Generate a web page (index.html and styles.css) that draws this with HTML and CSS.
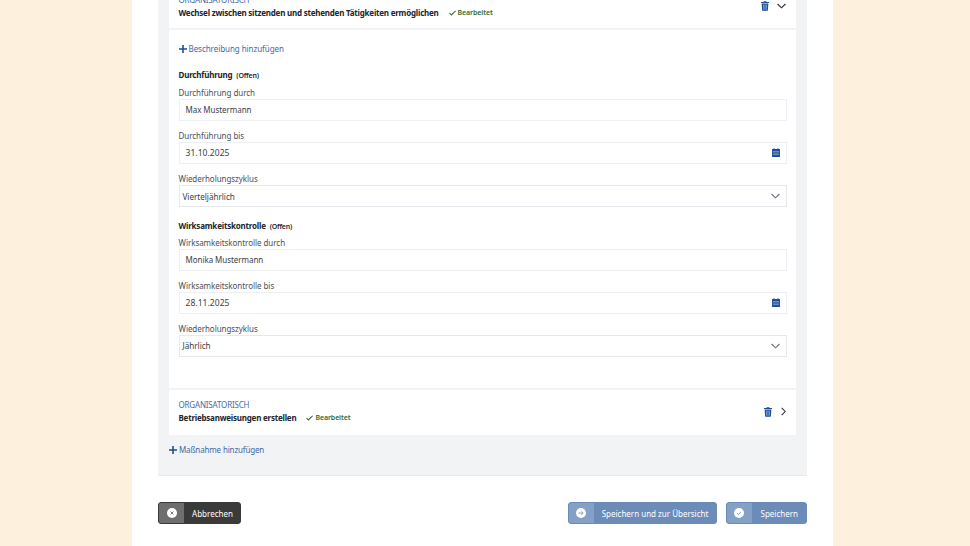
FILE: index.html
```html
<!DOCTYPE html>
<html lang="de">
<head>
<meta charset="utf-8">
<title>Maßnahmen</title>
<link rel="stylesheet" href="styles.css">
</head>
<body>
<svg class="defs" width="0" height="0" aria-hidden="true">
  <symbol id="trash" viewBox="0 0 10 12"><path fill="currentColor" d="M3.500 0h3l.5 1h3v1.200H0V1h3zM.8 3h8.400l-.6 8.200c0 .5-.4.8-.9.8H2.300c-.5 0-.9-.3-.9-.8z"/><path fill="#6f90c4" d="M2.400 4h1.500v6.800H2.600zM4.300 4h1.400v6.800H4.300zM6.100 4h1.500l-.2 6.800H6.100z"/></symbol>
  <symbol id="cal" viewBox="0 0 10 11"><path fill="currentColor" d="M2 0h1v1h4V0h1v1h2v10H0V1h2z"/><path fill="#b9c9e2" d="M1 3.500h8v.8H1zM1 5.700h8v.8H1zM1 7.900h8v.8H1z"/></symbol>
  <symbol id="plus" viewBox="0 0 8 8"><path fill="currentColor" d="M3.200 0h1.600v3.200H8v1.600H4.800V8H3.200V4.800H0V3.200h3.200z"/></symbol>
  <symbol id="check" viewBox="0 0 8 6"><path fill="none" stroke="currentColor" stroke-width="1.200" d="M.5 3l2.200 2.200L7.500.6"/></symbol>
  <symbol id="down" viewBox="0 0 10 6"><path fill="none" stroke="currentColor" stroke-width="1.300" d="M.6.8L5 5l4.400-4.200"/></symbol>
  <symbol id="right" viewBox="0 0 6 10"><path fill="none" stroke="currentColor" stroke-width="1.300" d="M.8.6L5 5 .8 9.400"/></symbol>
</svg>
<main class="page">
  <section class="panel">
    <article class="card">
      <header class="card-head card-head-open">
        <div class="head-text">
          <div class="category">ORGANISATORISCH</div>
          <div class="title-row">
            <strong class="title">Wechsel zwischen sitzenden und stehenden Tätigkeiten ermöglichen</strong>
            <span class="status"><svg class="i-check"><use href="#check"/></svg>Bearbeitet</span>
          </div>
        </div>
        <div class="head-icons">
          <svg class="i-trash"><use href="#trash"/></svg>
          <svg class="i-down-dark"><use href="#down"/></svg>
        </div>
      </header>
      <div class="card-body">
        <a class="add-link add-desc"><svg class="i-plus"><use href="#plus"/></svg>Beschreibung hinzufügen</a>
        <h3 class="group-title">Durchführung <span class="group-state">(Offen)</span></h3>
        <label class="label">Durchführung durch</label>
        <div class="field"><span class="value">Max Mustermann</span></div>
        <label class="label label-gap">Durchführung bis</label>
        <div class="field"><span class="value value-date">31.10.2025</span><svg class="i-cal"><use href="#cal"/></svg></div>
        <label class="label label-gap">Wiederholungszyklus</label>
        <div class="field field-select"><span class="value">Vierteljährlich</span><svg class="i-down"><use href="#down"/></svg></div>
        <h3 class="group-title group-second">Wirksamkeitskontrolle <span class="group-state">(Offen)</span></h3>
        <label class="label">Wirksamkeitskontrolle durch</label>
        <div class="field"><span class="value">Monika Mustermann</span></div>
        <label class="label label-gap">Wirksamkeitskontrolle bis</label>
        <div class="field"><span class="value value-date">28.11.2025</span><svg class="i-cal"><use href="#cal"/></svg></div>
        <label class="label label-gap">Wiederholungszyklus</label>
        <div class="field field-select"><span class="value">Jährlich</span><svg class="i-down"><use href="#down"/></svg></div>
      </div>
    </article>
    <article class="card card-closed">
      <header class="card-head">
        <div class="head-text">
          <div class="category">ORGANISATORISCH</div>
          <div class="title-row">
            <strong class="title">Betriebsanweisungen erstellen</strong>
            <span class="status"><svg class="i-check"><use href="#check"/></svg>Bearbeitet</span>
          </div>
        </div>
        <div class="head-icons">
          <svg class="i-trash"><use href="#trash"/></svg>
          <svg class="i-right"><use href="#right"/></svg>
        </div>
      </header>
    </article>
    <a class="add-link add-measure"><svg class="i-plus"><use href="#plus"/></svg>Maßnahme hinzufügen</a>
  </section>
  <footer class="actions">
    <button class="btn btn-dark"><span class="btn-icon"><svg class="i-circle" viewBox="0 0 10 10"><circle cx="5" cy="5" r="5" fill="#fff"/><path d="M3.500 3.500l3 3M6.500 3.500l-3 3" stroke="#777" stroke-width="1"/></svg></span><span class="btn-text">Abbrechen</span></button>
    <div class="actions-right">
      <button class="btn btn-blue btn-wide"><span class="btn-icon"><svg class="i-circle" viewBox="0 0 10 10"><circle cx="5" cy="5" r="5" fill="#fff"/><path d="M2.500 5h4.500M5.300 3.200L7.200 5 5.300 6.800" fill="none" stroke="#85a0c6" stroke-width="1"/></svg></span><span class="btn-text">Speichern und zur Übersicht</span></button>
      <button class="btn btn-blue btn-save"><span class="btn-icon"><svg class="i-circle" viewBox="0 0 10 10"><circle cx="5" cy="5" r="5" fill="#fff"/><path d="M3 5.200l1.500 1.400L7 3.800" fill="none" stroke="#85a0c6" stroke-width="1"/></svg></span><span class="btn-text">Speichern</span></button>
    </div>
  </footer>
</main>
</body>
</html>
```

FILE: styles.css
```css
* { box-sizing: border-box; }
html, body { height: 100%; }
body {
  margin: 0;
  height: 546px;
  overflow: hidden;
  background: #fdf1de;
  font-family: "Noto Sans", "Open Sans", sans-serif;
  font-size: 8px;
  letter-spacing: -0.05px;
  color: #2b2f36;
}
.defs { display: block; height: 0; }
.page {
  width: 701px;
  height: 546px;
  margin-left: 132px;
  padding: 0 26px;
  background: #fff;
  overflow: hidden;
}
.panel {
  margin-top: -12px;
  height: 488px;
  padding: 0 11px;
  background: #f2f3f5;
  border-bottom: 1px solid #e9ebef;
}
.card { background: #fff; }
.card-closed { border-top: 2px solid #f2f3f5; }
.card-head {
  display: flex;
  justify-content: space-between;
  padding: 8px 10px 0 9.500px;
  height: 45px;
}
.card-head-open {
  height: 42px;
  padding-top: 5px;
  border-bottom: 2px solid #f2f3f5;
}
.category {
  line-height: 13px;
  letter-spacing: -0.18px;
  color: #3f6aa6;
}
.title-row { display: flex; align-items: center; height: 13px; }
.title { font-weight: 700; letter-spacing: -0.22px; color: #20242b; }
.status {
  display: flex;
  align-items: center;
  margin-left: 10px;
  font-size: 7px;
  font-weight: 600;
  letter-spacing: -0.1px;
  color: #2f6b2f;
}
.i-check { width: 7px; height: 6px; margin-right: 2px; color: #2f6b2f; }
.head-icons { display: flex; align-items: center; gap: 9px; height: 27px; }
.card-head-open .head-icons { gap: 8px; height: 26px; }
.i-trash { width: 8px; height: 10px; color: #1e4f99; }
.i-down-dark { width: 9px; height: 6px; color: #2b2f36; }
.i-right { width: 5px; height: 9px; color: #2b2f36; }
.card-body { padding: 13px 9.500px 0; height: 358px; }
.add-link {
  display: flex;
  align-items: center;
  line-height: 12px;
  color: #3f6aa6;
}
.i-plus { width: 8px; height: 8px; margin-right: 2px; color: #1e4f99; }
.add-desc { margin-bottom: 13px; }
.add-measure { margin-top: 9px; letter-spacing: -0.15px; }
.group-title {
  margin: 0 0 4px;
  font-size: 8px;
  line-height: 13px;
  font-weight: 700;
  letter-spacing: -0.2px;
  color: #20242b;
}
.group-state { margin-left: 2px; font-size: 7px; font-weight: 600; }
.group-second { margin-top: 11.500px; margin-bottom: 3px; }
.label {
  display: block;
  line-height: 13px;
  color: #4a4f57;
}
.label-gap { margin-top: 8px; }
.field {
  display: flex;
  align-items: center;
  justify-content: space-between;
  height: 22px;
  padding: 0 6px 1px;
  background: #fff;
  border: 1px solid #eeeff2;
  color: #3c4047;
}
.value-date { font-size: 8.500px; letter-spacing: 0.05px; }
.field-select { padding: 0 6px 0 3px; border: 1.500px solid #e6e8ed; font-size: 8.200px; }
.i-cal { width: 8px; height: 9px; color: #1e4f99; }
.i-down { width: 9px; height: 6px; color: #6d727a; }
.actions {
  display: flex;
  justify-content: space-between;
  margin-top: 26px;
}
.actions-right { display: flex; gap: 9px; }
.btn {
  display: flex;
  align-items: stretch;
  height: 22px;
  padding: 0;
  border: 1px solid;
  border-radius: 3px;
  overflow: hidden;
  font: inherit;
  color: #fff;
}
.btn-dark { width: 83px; background: #3a3a3a; border-color: #3a3a3a; }
.btn-dark .btn-icon { background: #6e6e6e; }
.btn-blue { background: #6b8cb8; border-color: #6b8cb8; }
.btn-blue .btn-icon { background: #85a0c6; }
.btn-wide { width: 149px; }
.btn-save { width: 81.500px; }
.btn-icon {
  display: flex;
  align-items: center;
  justify-content: center;
  flex: 0 0 25px;
}
.i-circle { width: 10px; height: 10px; }
.btn-text { flex: 1; align-self: center; text-align: center; padding-left: 1px; }
```
